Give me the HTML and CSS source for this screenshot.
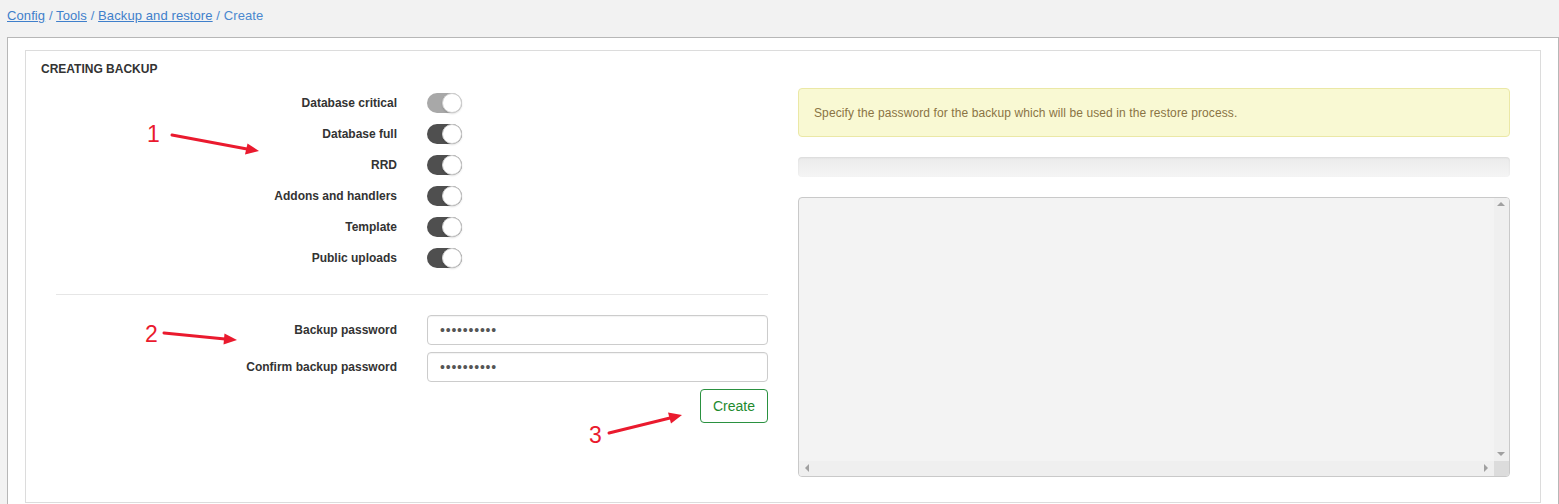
FILE: index.html
```html
<!DOCTYPE html>
<html>
<head>
<meta charset="utf-8">
<link rel="stylesheet" href="styles.css">
</head>
<body>
<div class="crumbs"><a href="#">Config</a> / <a href="#">Tools</a> / <a href="#">Backup and restore</a> / <span>Create</span></div>
<div class="outer">
  <div class="panel">
    <div class="panel-title">CREATING BACKUP</div>
    <div class="panel-body">
      <div class="col">
        <div class="row switch-row"><label>Database critical</label><div class="ctl"><span class="switch off"><span class="knob"></span></span></div></div>
        <div class="row switch-row"><label>Database full</label><div class="ctl"><span class="switch"><span class="knob"></span></span></div></div>
        <div class="row switch-row"><label>RRD</label><div class="ctl"><span class="switch"><span class="knob"></span></span></div></div>
        <div class="row switch-row"><label>Addons and handlers</label><div class="ctl"><span class="switch"><span class="knob"></span></span></div></div>
        <div class="row switch-row"><label>Template</label><div class="ctl"><span class="switch"><span class="knob"></span></span></div></div>
        <div class="row switch-row"><label>Public uploads</label><div class="ctl"><span class="switch"><span class="knob"></span></span></div></div>
        <hr class="divider">
        <div class="row form-row"><label>Backup password</label><div class="ctl"><input class="input" type="password" value="1234567890"></div></div>
        <div class="row form-row"><label>Confirm backup password</label><div class="ctl"><input class="input" type="password" value="1234567890"></div></div>
        <div class="btn-row"><button class="btn" type="button">Create</button></div>
      </div>
      <div class="col right">
        <div class="alert">Specify the password for the backup which will be used in the restore process.</div>
        <div class="progress"></div>
        <div class="log">
          <div class="log-content"></div>
          <div class="vbar"><span class="arr up"></span><span class="arr down"></span></div>
          <div class="hbar"><span class="arr left"></span><span class="arr right-arr"></span></div>
          <div class="corner"></div>
        </div>
      </div>
    </div>
  </div>
</div>
<svg class="annot" width="1559" height="504" viewBox="0 0 1559 504">
  <g fill="#ea1a2e" stroke="none">
    <text x="147" y="142" class="num">1</text>
    <text x="145" y="342" class="num">2</text>
    <text x="589" y="443" class="num">3</text>
  </g>
  <g stroke="#ea1a2e" stroke-width="3" stroke-linecap="round">
    <line x1="172" y1="135" x2="247" y2="149"/>
    <line x1="164" y1="333" x2="225" y2="339"/>
    <line x1="609" y1="433" x2="670" y2="418"/>
  </g>
  <g fill="#ea1a2e">
    <polygon points="259,151 245,154.5 247.5,143.5"/>
    <polygon points="237,340 223.5,344.5 224.5,333.5"/>
    <polygon points="682,415 671,423.5 668,412.5"/>
  </g>
</svg>
</body>
</html>
```
FILE: styles.css
```css
* { box-sizing: border-box; }
html, body { margin: 0; padding: 0; }
body {
  background: #f2f2f2;
  font-family: "Liberation Sans", Arial, sans-serif;
  color: #333;
  position: relative;
  overflow: hidden;
  height: 504px;
}
.crumbs {
  height: 37px;
  padding: 7px 7px 0;
  font-size: 13px;
  line-height: 18px;
  letter-spacing: 0.1px;
  color: #4a88cf;
}
.crumbs a { color: #3f7fcb; text-decoration: underline; }
.crumbs span { color: #4a88cf; }
.outer {
  margin-left: 7px;
  border: 1px solid #b7b7b7;
  background: #fff;
  padding: 12px 17px;
}
.panel {
  border: 1px solid #dcdcdc;
  background: #fff;
  padding: 0 15px;
}
.panel-title {
  padding-top: 10px;
  font-size: 12px;
  font-weight: bold;
  line-height: 17px;
  color: #333;
}
.panel-body {
  display: flex;
  padding-top: 9px;
  padding-bottom: 25px;
}
.col {
  flex: 1 1 0;
  padding: 0 15px;
  min-width: 0;
}
.col.right { padding-top: 1px; }
.row {
  display: grid;
  grid-template-columns: 1fr 1fr;
  column-gap: 30px;
  align-items: center;
}
.row label {
  text-align: right;
  font-size: 12px;
  font-weight: bold;
  color: #333;
}
.switch-row { height: 31px; }
.switch {
  position: relative;
  display: block;
  width: 35px;
  height: 20px;
  border-radius: 10px;
  background: #4f4f4f;
}
.switch.off { background: #a8a8a8; }
.knob {
  position: absolute;
  right: 0;
  top: 0;
  width: 20px;
  height: 20px;
  border-radius: 50%;
  background: #fff;
  border: 1px solid #d0d0d0;
  box-shadow: 0 1px 2px rgba(0,0,0,0.15);
}
.divider {
  border: 0;
  border-top: 1px solid #e6e6e6;
  margin: 21px 0 20px;
  height: 0;
}
.form-row { height: 30px; margin-bottom: 7px; }
.input {
  display: block;
  width: 100%;
  height: 30px;
  border: 1px solid #cccccc;
  border-radius: 4px;
  padding: 0 12px;
  font-family: "Liberation Sans", Arial, sans-serif;
  font-size: 14px;
  color: #555;
  letter-spacing: 0.8px;
  background: #fff;
  box-shadow: inset 0 1px 1px rgba(0,0,0,0.05);
}
.btn-row { display: flex; justify-content: flex-end; }
.btn {
  height: 34px;
  padding: 0 12px;
  font-family: "Liberation Sans", Arial, sans-serif;
  font-size: 14px;
  color: #1e8a2e;
  background: #fff;
  border: 1px solid #2a9140;
  border-radius: 4px;
}
.alert {
  height: 49px;
  padding: 0 15px;
  display: flex;
  align-items: center;
  background: #f9f9d3;
  border: 1px solid #ebe8a6;
  border-radius: 4px;
  color: #8a7444;
  font-size: 12px;
  letter-spacing: 0.1px;
}
.progress {
  margin-top: 20px;
  height: 20px;
  background: linear-gradient(#ebebeb, #f5f5f5);
  border-radius: 4px;
  box-shadow: inset 0 1px 2px rgba(0,0,0,0.08);
}
.log {
  margin-top: 20px;
  height: 280px;
  display: grid;
  grid-template-columns: 1fr 15px;
  grid-template-rows: 1fr 15px;
  background: #f3f3f3;
  border: 1px solid #c9c9c9;
  border-radius: 4px;
  overflow: hidden;
}
.vbar {
  background: #efefef;
  position: relative;
}
.hbar {
  background: #efefef;
  position: relative;
}
.corner { background: #dcdcdc; }
.arr { position: absolute; width: 0; height: 0; border: 4px solid transparent; }
.arr.up { top: 4px; left: 3px; border-bottom-color: #a0a0a0; border-top-width: 0; }
.arr.down { bottom: 5px; left: 3px; border-top-color: #a0a0a0; border-bottom-width: 0; }
.arr.left { left: 6px; top: 3px; border-right-color: #a0a0a0; border-left-width: 0; }
.arr.right-arr { right: 6px; top: 3px; border-left-color: #a0a0a0; border-right-width: 0; }
.annot {
  position: absolute;
  left: 0;
  top: 0;
  pointer-events: none;
}
.num {
  font-family: "Liberation Sans", Arial, sans-serif;
  font-size: 23px;
}
```
